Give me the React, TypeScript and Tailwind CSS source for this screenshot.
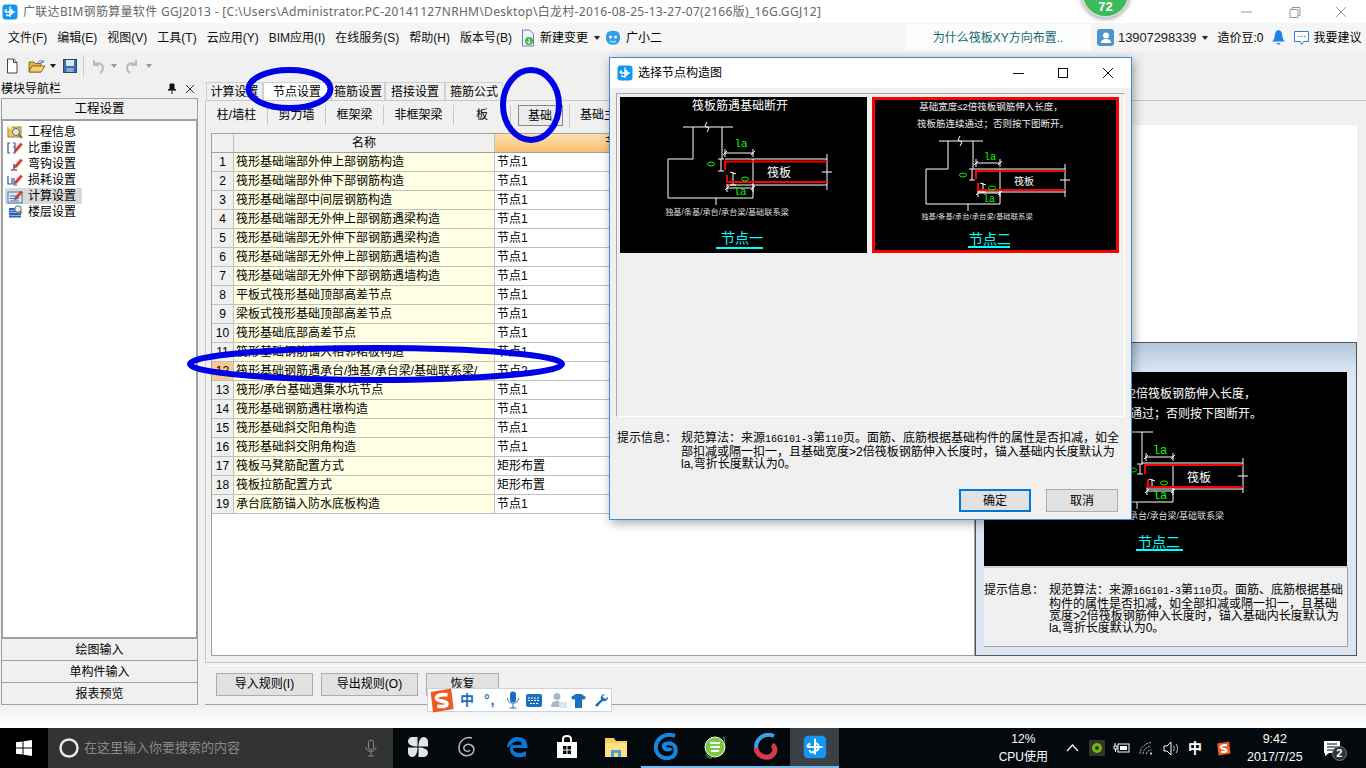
import React from "react";

const font = "font-['Liberation_Sans','Noto_Sans_CJK_SC',sans-serif]";

function AppIcon({ s = 16 }: { s?: number }) {
  return (
    <svg width={s} height={s} viewBox="0 0 16 16" className="shrink-0">
      <rect x="0.5" y="0.5" width="15" height="15" rx="3" fill="#1296f0" />
      <path d="M8 2.5V13M3 8h10M8 5.5c3 0 3.5 5 0 5M8 10.5c-2 2-3.500 1-3.500-.5M3 8c0-1.500 1-2 2-2" stroke="#fff" strokeWidth="1.300" fill="none" />
    </svg>
  );
}

function PencilMark() {
  return (
    <path d="M8 9.500 13.500 3l2 1.500L10 11l-2.500 1z" fill="#e8402a" stroke="#b8261a" strokeWidth="0.500" />
  );
}

function TreeIcon({ kind }: { kind: number }) {
  return (
    <svg width="17" height="16" viewBox="0 0 17 16" className="shrink-0">
      {kind === 0 && (
        <g>
          <rect x="1" y="3" width="13" height="10" fill="#e8c860" stroke="#a08030" />
          <circle cx="3" cy="3" r="2" fill="#fff2a0" />
          <circle cx="9" cy="8" r="3.500" fill="#dfe8ee" stroke="#666" />
          <path d="M11.500 10.500 15 14" stroke="#a06a20" strokeWidth="2" />
        </g>
      )}
      {kind === 1 && (
        <g>
          <path d="M3 3H1v10h2M6 3h2M6 7h2M6 13h2V3" stroke="#2a5aa0" fill="none" strokeWidth="1.200" />
          <PencilMark />
        </g>
      )}
      {kind === 2 && (
        <g>
          <path d="M7 13V8M4 14h6" stroke="#222" strokeWidth="1.200" fill="none" />
          <PencilMark />
        </g>
      )}
      {kind === 3 && (
        <g>
          <path d="M1 4v8h4V6M7 6v7h3" stroke="#2a5aa0" fill="none" strokeWidth="1.200" />
          <PencilMark />
        </g>
      )}
      {kind === 4 && (
        <g>
          <rect x="1" y="4" width="14" height="11" fill="#d8e8f6" stroke="#3a78b0" />
          <path d="M3 8h7M3 10.500h9M3 13h9" stroke="#3a78b0" />
          <PencilMark />
        </g>
      )}
      {kind === 5 && (
        <g>
          <path d="M2 5h11M2 7.500h12M2 10h12M2 12.500h12" stroke="#2a62b8" strokeWidth="1.800" />
          <circle cx="11" cy="5" r="3.200" fill="#e8eef2" stroke="#666" />
          <path d="M13 7l2 2" stroke="#a06a20" strokeWidth="1.600" />
        </g>
      )}
    </svg>
  );
}

type G = {
  topL: number; topR: number; topY: number; brk: number; colL: number; colR: number;
  boxL: number; boxR: number; boxT: number; boxB: number; tick: number;
  sL: number; sL2: number; sR: number; sT: number; sB: number;
  rT: number; rB: number; rX1: number; rX2: number; rV1: number; rV2: number;
  eT: number; eB: number; bY: number; sx: number; sy: number; sf: number;
  la1: [number, number]; la2: [number, number]; d1: [number, number, number]; d2: [number, number, number];
  z1: [number, number]; z2: [number, number];
  small: [number, number, number]; lab: [number, number]; ul: [number, number, number];
  name: string;
};

function Dim({ x1, y, x2 }: { x1: number; y: number; x2: number }) {
  return (
    <path d={`M${x1} ${y}H${x2}M${x1} ${y - 4}V${y + 4}M${x2} ${y - 4}V${y + 4}M${x1 - 2} ${y + 2}l4 -4M${x2 - 2} ${y + 2}l4 -4`} stroke="#fff" fill="none" />
  );
}

function Detail({ g, children }: { g: G; children?: React.ReactNode }) {
  return (
    <g>
      {children}
      <g stroke="#fff" fill="none" strokeWidth="1">
        <path d={`M${g.topL} ${g.topY}H${g.topR}M${g.colL} ${g.topY}V${g.boxT}M${g.colR} ${g.topY}V${g.boxT}`} />
        <path d={`M${g.brk - 1} ${g.topY - 5}l-2 4 4 2 -2 4`} />
        <path d={`M${g.colL} ${g.boxT}H${g.boxL}V${g.boxB}H${g.boxR}V${g.boxT}M${g.tick} ${g.boxB}v7`} />
        <path d={`M${g.sL} ${g.sT}H${g.sR}M${g.sL2} ${g.sB}H${g.sR}M${g.sR} ${g.eT}V${g.eB}M${g.sR - 5} ${g.bY}h10`} />
        <path d={`M${g.d1[0]} ${g.d1[1]}V${g.d1[2]}M${g.d1[0] - 3} ${g.d1[1]}h6M${g.d1[0] - 3} ${g.d1[2]}h6`} />
        <path d={`M${g.d2[0]} ${g.d2[1]}V${g.d2[2]}M${g.d2[0] - 3} ${g.d2[1]}l6 2M${g.d2[0] - 3} ${g.d2[2]}h6`} />
      </g>
      <Dim x1={g.la1[0]} x2={g.boxR} y={g.la1[1]} />
      <Dim x1={g.la2[0]} x2={g.boxR} y={g.la2[1]} />
      <path d={`M${g.rX1} ${g.rV1}V${g.rT}H${g.sR}M${g.rX2} ${g.rV2}V${g.rB}H${g.sR}`} stroke="#ff0000" strokeWidth="2" fill="none" />
      <ellipse cx={g.z1[0]} cy={g.z1[1]} rx="3.500" ry="2" stroke="#00ff00" fill="none" />
      <ellipse cx={g.z2[0]} cy={g.z2[1]} rx="3.500" ry="2" stroke="#00ff00" fill="none" />
      <text x={g.sx} y={g.sy} textAnchor="middle" fontSize={g.sf} fill="#fff" dominantBaseline="central">筏板</text>
      <text x={g.small[0]} y={g.small[1]} textAnchor="middle" fontSize={g.small[2]} fill="#ddd" dominantBaseline="central">独基/条基/承台/承台梁/基础联系梁</text>
      <text x={g.lab[0]} y={g.lab[1]} textAnchor="middle" fontSize="14" fill="#00ffff" dominantBaseline="central">{g.name}</text>
      <path d={`M${g.ul[0]} ${g.ul[2]}H${g.ul[1]}`} stroke="#00ffff" strokeWidth="2" />
    </g>
  );
}

function La({ x, y, f }: { x: number; y: number; f: number }) {
  return (
    <text x={x} y={y} textAnchor="middle" fontSize={f} fill="#00ff00" dominantBaseline="central" className="font-['Liberation_Mono',monospace]">la</text>
  );
}

function Num({ children }: { children: React.ReactNode }) {
  return <span className="font-['Liberation_Mono',monospace] text-[10px]">{children}</span>;
}

const g1: G = {
  topL: 63, topR: 113, topY: 30, brk: 88, colL: 73, colR: 102, boxL: 48, boxR: 133, boxT: 62, boxB: 101, tick: 96,
  sL: 105, sL2: 107, sR: 207, sT: 62, sB: 88, rT: 64.5, rB: 85, rX1: 105, rX2: 107, rV1: 73, rV2: 78,
  eT: 57, eB: 93, bY: 75, sx: 159, sy: 76, sf: 12, la1: [105, 56], la2: [107, 91], d1: [101, 62, 74], d2: [113, 75, 88],
  z1: [91, 67], z2: [125, 82], small: [107, 115, 8.2], lab: [122, 141], ul: [96, 143, 151], name: "节点一",
};
const g2: G = {
  topL: 67, topR: 111, topY: 44, brk: 89, colL: 76, colR: 101, boxL: 54, boxR: 128, boxT: 72, boxB: 107, tick: 96,
  sL: 103, sL2: 106, sR: 193, sT: 72, sB: 95, rT: 74, rB: 93, rX1: 104, rX2: 106, rV1: 82, rV2: 86,
  eT: 67, eB: 100, bY: 83, sx: 152, sy: 84, sf: 10, la1: [104, 66], la2: [106, 96], d1: [100, 72, 83], d2: [111, 86, 95],
  z1: [91, 78], z2: [120, 91], small: [105, 119, 7.4], lab: [118, 142], ul: [96, 138, 150], name: "节点二",
};
const g3: G = {
  topL: 96, topR: 169, topY: 60, brk: 130, colL: 130, colR: 158, boxL: 105, boxR: 189, boxT: 92, boxB: 130, tick: 153,
  sL: 158, sL2: 163, sR: 259, sT: 91, sB: 117, rT: 93, rB: 115, rX1: 161, rX2: 164, rV1: 102, rV2: 107,
  eT: 86, eB: 121, bY: 104, sx: 215, sy: 106, sf: 12, la1: [162, 85], la2: [163, 119], d1: [156, 92, 102], d2: [168, 107, 115],
  z1: [149, 98], z2: [180, 111], small: [172, 144, 9], lab: [175, 170], ul: [152, 199, 178], name: "节点二",
};

const rows: [string, string][] = [
  ["筏形基础端部外伸上部钢筋构造", "节点1"],
  ["筏形基础端部外伸下部钢筋构造", "节点1"],
  ["筏形基础端部中间层钢筋构造", "节点1"],
  ["筏形基础端部无外伸上部钢筋遇梁构造", "节点1"],
  ["筏形基础端部无外伸下部钢筋遇梁构造", "节点1"],
  ["筏形基础端部无外伸上部钢筋遇墙构造", "节点1"],
  ["筏形基础端部无外伸下部钢筋遇墙构造", "节点1"],
  ["平板式筏形基础顶部高差节点", "节点1"],
  ["梁板式筏形基础顶部高差节点", "节点1"],
  ["筏形基础底部高差节点", "节点1"],
  ["筏形基础钢筋锚入相邻裙板构造", "节点1"],
  ["筏形基础钢筋遇承台/独基/承台梁/基础联系梁/", "节点2"],
  ["筏形/承台基础遇集水坑节点", "节点1"],
  ["筏形基础钢筋遇柱墩构造", "节点1"],
  ["筏形基础斜交阳角构造", "节点1"],
  ["筏形基础斜交阴角构造", "节点1"],
  ["筏板马凳筋配置方式", "矩形布置"],
  ["筏板拉筋配置方式", "矩形布置"],
  ["承台底筋锚入防水底板构造", "节点1"],
];

const menus = ["文件(F)", "编辑(E)", "视图(V)", "工具(T)", "云应用(Y)", "BIM应用(I)", "在线服务(S)", "帮助(H)", "版本号(B)"];
const tree = ["工程信息", "比重设置", "弯钩设置", "损耗设置", "计算设置", "楼层设置"];
const topTabs: [string, string][] = [
  ["计算设置", "w-[57px]"],
  ["节点设置", "w-[68px] bg-white"],
  ["箍筋设置", "w-[54px]"],
  ["搭接设置", "w-[60px]"],
  ["箍筋公式", "w-[58px]"],
];
const subTabs: [string, string][] = [
  ["柱/墙柱", "w-[62px]"],
  ["剪力墙", "w-[58px]"],
  ["框架梁", "w-[58px]"],
  ["非框架梁", "w-[70px]"],
  ["板", "w-[57px]"],
];

function Btn({ label, w, primary }: { label: string; w: string; primary?: boolean }) {
  return (
    <div className={`h-[23px] flex items-center justify-center bg-[#e1e1e1] text-[12px] text-black ${w} ${primary ? "border-2 border-[#0078d7]" : "border border-[#adadad]"}`}>
      {label}
    </div>
  );
}

function TaskCell({ children, active, bar }: { children: React.ReactNode; active?: boolean; bar?: boolean }) {
  return (
    <div className={`w-[49.600px] h-full flex items-center justify-center border-b-2 ${active ? "bg-[#3a4044] border-[#76b9ed]" : bar ? "border-[#76b9ed]" : "border-transparent"}`}>
      {children}
    </div>
  );
}

function SougouS({ s }: { s: number }) {
  return (
    <svg width={s} height={s} viewBox="0 0 24 24" className="shrink-0">
      <path d="M3 5 20 2l2 17-17 3z" fill="#ee5a24" />
      <path d="M17 7.500C11 6.500 7.500 8 8 10.500c.500 2.500 8 1.500 8.500 4 .5 2.500-4 3-8 2" stroke="#fff" strokeWidth="3" fill="none" />
    </svg>
  );
}

export default function App() {
  return (
    <div className={`relative w-[1366px] h-[768px] overflow-hidden bg-[#f0f0f0] flex flex-col text-[12px] text-black ${font}`}>
      {/* title bar */}
      <div className="h-[23px] bg-white flex items-center relative shrink-0">
        <div className="pl-[2px] pr-[5px]">
          <AppIcon />
        </div>
        <span className="text-[#666] whitespace-nowrap text-[12px] font-['Noto_Sans','Noto_Sans_CJK_SC',sans-serif] tracking-[0.31px]">
          广联达BIM钢筋算量软件 GGJ2013 - [C:\Users\Administrator.PC-20141127NRHM\Desktop\白龙村-2016-08-25-13-27-07(2166版)_16G.GGJ12]
        </span>
        <div className="ml-auto flex items-center h-full text-[#999]">
          <svg width="46" height="16" viewBox="0 0 46 16"><path d="M15 8h11" stroke="#999" /></svg>
          <svg width="46" height="16" viewBox="0 0 46 16"><path d="M18 5.500h8v8h-8zM20 5.500v-2h8v8h-2" stroke="#999" fill="none" /></svg>
          <svg width="46" height="16" viewBox="0 0 46 16" className="mr-[2px]"><path d="M18 3l10 10M28 3 18 13" stroke="#999" fill="none" /></svg>
        </div>
      </div>

      {/* menu bar */}
      <div className="h-[29px] bg-[#f5f5f5] flex items-center shrink-0 pl-[8px] relative">
        <div className="flex items-center gap-[10px]">
          {menus.map((m) => (
            <span key={m} className="whitespace-nowrap text-[#111]">{m}</span>
          ))}
        </div>
        <svg width="15" height="18" viewBox="0 0 15 18" className="ml-[9px]">
          <path d="M1.500 1h7l4 4v12h-11z" fill="#eef3fa" stroke="#5b86c0" />
          <circle cx="8" cy="12" r="4" fill="#4caf3c" />
          <path d="M8 9.500v5M6 12.500l2 2 2-2" stroke="#fff" fill="none" />
        </svg>
        <span className="ml-[4px] whitespace-nowrap">新建变更</span>
        <span className="ml-[6px] w-0 h-0 border-x-[3px] border-x-transparent border-t-[4px] border-t-[#222]" />
        <svg width="16" height="16" viewBox="0 0 16 16" className="ml-[5px]">
          <path d="M2 3c2-3 10-3 12 0 2 4 1 9-2 11-2 1-6 1-8 0C1 12 0 7 2 3z" fill="#2f9fe8" />
          <circle cx="5.500" cy="7" r="1.500" fill="#fff" />
          <circle cx="10.500" cy="7" r="1.500" fill="#fff" />
          <path d="M5 11c2 1.500 4 1.500 6 0" stroke="#fff" fill="none" />
        </svg>
        <span className="ml-[5px] whitespace-nowrap">广小二</span>

        <div className="absolute left-[905px] top-[1px] h-[27px] w-[186px] bg-[#fbfdfd] flex items-center justify-center text-[#15686f] whitespace-nowrap">
          为什么筏板XY方向布置..
        </div>
        <div className="absolute left-[1097px] top-0 h-full flex items-center">
          <svg width="17" height="17" viewBox="0 0 17 17">
            <rect width="17" height="17" rx="3" fill="#4a94cf" />
            <circle cx="9" cy="6.500" r="3" fill="#fff" />
            <path d="M4 14c0-3 2-4 5-4s5 1 5 4z" fill="#fff" />
          </svg>
          <span className="ml-[4px] text-[13px] text-[#222] tracking-[-0.100px]">13907298339</span>
          <span className="ml-[6px] w-0 h-0 border-x-[3px] border-x-transparent border-t-[4px] border-t-[#222]" />
          <span className="ml-[9px] text-[12px] whitespace-nowrap">造价豆:0</span>
          <svg width="13" height="15" viewBox="0 0 13 15" className="ml-[9px]">
            <path d="M6.500 0C3 1 3 4 2.500 7S1 10.500 0 11.500h13C12 10.500 11 10 10.500 7S10 1 6.500 0z" fill="#1a82e8" />
            <path d="M4.500 13c1 2 3 2 4 0z" fill="#1a82e8" />
          </svg>
          <svg width="17" height="16" viewBox="0 0 17 16" className="ml-[8px]">
            <path d="M1.500 1.500h14v10h-5l-2 3-1-3h-6z" fill="#fff" stroke="#2a82d8" />
            <path d="M5 6.500h1.500M8 6.500h1.500M11 6.500h1.500" stroke="#2a82d8" />
          </svg>
          <span className="ml-[3px] whitespace-nowrap">我要建议</span>
        </div>
      </div>

      {/* toolbar */}
      <div className="h-[28px] flex items-center shrink-0 pl-[5px]">
        <svg width="14" height="16" viewBox="0 0 14 16"><path d="M2.500 1h6l3.500 3.500V15h-9.500z" fill="#fff" stroke="#444" /><path d="M8.500 1v3.500H12" fill="none" stroke="#444" /></svg>
        <svg width="18" height="16" viewBox="0 0 18 16" className="ml-[9px]"><path d="M1 4h5l1 1.500h6V14H1z" fill="#d8b050" stroke="#8a6a20" /><path d="M1 14l3-6h13l-4 6z" fill="#f3d070" stroke="#8a6a20" /><path d="M10 5c1-3 4-3 5-1M15 2v2.500h-2.500" stroke="#4a78c0" fill="none" /></svg>
        <span className="ml-[4px] w-0 h-0 border-x-[3px] border-x-transparent border-t-[4px] border-t-[#222]" />
        <svg width="14" height="14" viewBox="0 0 14 14" className="ml-[7px]"><rect x="0.500" y="0.500" width="13" height="13" fill="#3a6cb0" stroke="#24487c" /><rect x="3" y="1" width="8" height="6" fill="#dfe8f2" /><rect x="3.500" y="9" width="7" height="4" fill="#8aa8d0" /></svg>
        <span className="ml-[6px] w-px h-[22px] bg-[#ccc]" />
        <svg width="15" height="15" viewBox="0 0 15 15" className="ml-[7px]"><path d="M3 1v5h5M3 6c3-3 9-2 9 3 0 2-1 4-3 5" stroke="#bbb" strokeWidth="2" fill="none" /></svg>
        <span className="ml-[5px] w-0 h-0 border-x-[3px] border-x-transparent border-t-[4px] border-t-[#999]" />
        <svg width="15" height="15" viewBox="0 0 15 15" className="ml-[7px]"><path d="M12 1v5H7M12 6C9 3 3 4 3 9c0 2 1 4 3 5" stroke="#bbb" strokeWidth="2" fill="none" /></svg>
        <span className="ml-[7px] w-0 h-0 border-x-[3px] border-x-transparent border-t-[4px] border-t-[#999]" />
      </div>

      {/* main */}
      <div className="flex-1 flex min-h-0">
        {/* left nav */}
        <div className="w-[199px] shrink-0 flex flex-col">
          <div className="h-[17px] flex items-center relative">
            <span className="text-[12px] pl-px">模块导航栏</span>
            <svg width="10" height="12" viewBox="0 0 10 12" className="absolute left-[167px] top-[3px]"><path d="M3 1h4v5l2 1H1l2-1zM5 7v4" stroke="#111" fill="#111" /></svg>
            <svg width="10" height="10" viewBox="0 0 10 10" className="absolute left-[185px] top-[4px]"><path d="M1 1l8 8M9 1 1 9" stroke="#333" /></svg>
          </div>
          <div className="mt-[1px] h-[22px] pt-px mx-px border border-[#a0a0a0] flex items-center justify-center text-[12.500px]">工程设置</div>
          <div className="flex-1 mx-px bg-white border-2 border-t border-[#a0a0a0] pt-[3px] pl-[2px]">
            {tree.map((t, i) => (
              <div key={t} className={`h-[16px] w-[77px] flex items-center pl-[2px] gap-[4px] ${i === 4 ? "bg-[#d9d9d9]" : ""}`}>
                <TreeIcon kind={i} />
                <span className="whitespace-nowrap text-[12px] leading-[16px]">{t}</span>
              </div>
            ))}
          </div>
          {["绘图输入", "单构件输入", "报表预览"].map((t) => (
            <div key={t} className="h-[22px] pt-px mx-px border border-[#a0a0a0] border-t-0 first-of-type:border-t flex items-center justify-center">{t}</div>
          ))}
        </div>

        {/* right */}
        <div className="flex-1 min-w-0 flex flex-col pl-[6px]">
          <div className="h-[18px] mt-[2px] flex pl-px shrink-0">
            {topTabs.map(([t, w]) => (
              <div key={t} className={`h-full border border-b-0 border-[#d0d0d0] flex items-center justify-center whitespace-nowrap ${w}`}>{t}</div>
            ))}
          </div>
          <div className="flex-1 min-h-0 border border-[#c8c8c8] border-r-0 flex flex-col">
            <div className="h-[24px] shrink-0 flex items-center">
              {subTabs.map(([t, w]) => (
                <div key={t} className={`h-[20px] mt-[4px] flex items-center justify-center whitespace-nowrap border-r border-[#c8c8c8] ${w}`}>{t}</div>
              ))}
              <div className="w-[59px] h-[24px] mt-[5px] flex items-center justify-center border-r border-[#c8c8c8]">
                <div className="w-[45px] h-[21px] bg-[#ececec] border border-[#888] flex items-center justify-center">基础</div>
              </div>
              <span className="ml-[10px] mt-[4px] whitespace-nowrap">基础主梁/承台梁</span>
            </div>
            <div className="flex-1 min-h-0 flex">
              {/* table */}
              <div className="w-[769px] shrink-0 pl-[5px] pt-[8px] pb-[6px]">
                <div className="h-full bg-white border border-[#a0a0a0]">
                  <div className="h-[19px] flex border-b border-[#a0a0a0] bg-[#f0f0f0]">
                    <div className="w-[22px] border-r border-[#c0c0c0]" />
                    <div className="w-[261px] border-r border-[#c0c0c0] flex items-center justify-center">名称</div>
                    <div className="w-[244px] bg-gradient-to-b from-[#fbe0b0] to-[#f8c070] flex items-center justify-center">节点</div>
                  </div>
                  {rows.map(([n, v], i) => (
                    <div key={i} className="h-[19px] flex border-b border-[#c0c0c0]">
                      <div className={`w-[22px] border-r border-[#c0c0c0] flex items-center justify-center ${i === 11 ? "bg-[#fcc98a]" : "bg-[#f0f0f0]"}`}>{i + 1}</div>
                      <div className="w-[261px] border-r border-[#c0c0c0] bg-[#ffffe3] flex items-center pl-[2px] whitespace-nowrap overflow-hidden">{n}</div>
                      <div className="flex-1 flex items-center pl-[2px]">{v}</div>
                    </div>
                  ))}
                </div>
              </div>
              {/* right side */}
              <div className="w-[382px] shrink-0 flex flex-col pb-[6px]">
                <div className="flex-1 bg-white" />
                <div className="h-[314px] border border-[#555] bg-[#dbe6f2] flex flex-col px-[8px]">
                  <div className="h-[29px] -mx-[8px] shrink-0 bg-gradient-to-b from-[#b3c8dc] to-[#dbe6f2]" />
                  <svg width="363" height="194" viewBox="0 0 363 194" className="shrink-0 bg-black">
                    <Detail g={g3}>
                      <text x="272" y="22" textAnchor="end" fontSize="12" fill="#fff" dominantBaseline="central">基础宽度≤2倍筏板钢筋伸入长度，</text>
                      <text x="278" y="42" textAnchor="end" fontSize="12" fill="#fff" dominantBaseline="central">筏板筋连续通过；否则按下图断开。</text>
                    </Detail>
                    <La x={176} y={79} f={12} />
                    <La x={176} y={124} f={12} />
                  </svg>
                  <div className="h-[81px] shrink-0 bg-[#f0f0f0] border-r border-b border-[#a0a0a0] border-t-2 border-t-[#d0d0d0] flex pt-[16px] leading-[12px]">
                    <span className="w-[65px] shrink-0 whitespace-nowrap">提示信息：</span>
                    <div className="whitespace-nowrap">
                      <div>规范算法：来源<Num>16G101-3</Num>第<Num>110</Num>页。面筋、底筋根据基础</div>
                      <div>构件的属性是否扣减，如全部扣减或隔一扣一，且基础</div>
                      <div>宽度&gt;2倍筏板钢筋伸入长度时，锚入基础内长度默认为</div>
                      <div>la,弯折长度默认为0。</div>
                    </div>
                  </div>
                </div>
              </div>
            </div>
          </div>
          <div className="h-[40px] shrink-0 mt-[2px] border-t border-white border-b border-b-[#a0a0a0] flex items-center pl-[11px] pb-[2px] gap-[8px]">
            <Btn label="导入规则(I)" w="w-[97px]" />
            <Btn label="导出规则(O)" w="w-[97px]" />
            <Btn label="恢复" w="w-[73px]" />
          </div>
        </div>
      </div>

      <div className="h-[23px] shrink-0 bg-gradient-to-b from-[#f0f0f0] to-white" />

      {/* taskbar */}
      <div className="h-[40px] shrink-0 bg-[#03090c] flex items-center text-white">
        <div className="w-[48px] h-full bg-black flex items-center justify-center">
          <svg width="16" height="16" viewBox="0 0 16 16"><path d="M0 2.300 6.500 1.400V7.500H0zM7.500 1.300 16 0v7.500H7.500zM0 8.500h6.500v6.100L0 13.700zM7.500 8.500H16V16l-8.500-1.300z" fill="#fff" /></svg>
        </div>
        <div className="w-[345px] h-full bg-[#333] flex items-center pl-[10px] relative">
          <svg width="22" height="22" viewBox="0 0 22 22"><circle cx="11" cy="11" r="8.500" stroke="#e8e8e8" strokeWidth="2.500" fill="none" /></svg>
          <span className="ml-[4px] text-[#888] text-[13px] whitespace-nowrap">在这里输入你要搜索的内容</span>
          <svg width="14" height="18" viewBox="0 0 14 18" className="absolute left-[316px] top-[11px]"><rect x="4.500" y="1" width="5" height="10" rx="2.500" stroke="#888" fill="none" /><path d="M2 8c0 6 10 6 10 0M7 13v4M4 17h6" stroke="#888" fill="none" /></svg>
        </div>
        <TaskCell>
          <svg width="22" height="22" viewBox="0 0 22 22">
            <g fill="#e4e4e4">
              <path id="blade" d="M10.500 10.500V1H5.500a4.500 4.500 0 0 0-4.500 4.500c0 3 4 5 9.500 5z" />
              <path d="M11.500 10.500H21V5.500A4.500 4.500 0 0 0 16.500 1c-3 0-5 4-5 9.500z" />
              <path d="M11.500 11.500V21h5a4.500 4.500 0 0 0 4.500-4.500c0-3-4-5-9.500-5z" />
              <path d="M10.500 11.500H1v5A4.500 4.500 0 0 0 5.500 21c3 0 5-4 5-9.500z" />
            </g>
          </svg>
        </TaskCell>
        <TaskCell>
          <svg width="22" height="24" viewBox="0 0 22 24"><path d="M16 3C8 1 3 7 3 13s6 9 11 7 5-8 1-10-8 1-7 4 5 3 6 1" stroke="#bbb" strokeWidth="1.500" fill="none" /></svg>
        </TaskCell>
        <TaskCell>
          <svg width="24" height="24" viewBox="0 0 24 24"><path d="M2 12C3 5 8 2 13 2c6 0 10 4 9.500 11H8c0 5 7 7 13 3v5c-7 3-16 1-16-7 0-2 1-4 2-5 1 2 2 1 7 1 2 0 3 0 3-1 0-3-7-5-13 3z" fill="#0a78d7" /></svg>
        </TaskCell>
        <TaskCell>
          <svg width="22" height="24" viewBox="0 0 22 24"><path d="M1 7h20v16H1z" fill="#fff" /><path d="M7 7V4c0-4 8-4 8 0v3" stroke="#fff" strokeWidth="2" fill="none" /><path d="M7 11h3.500v3.500H7zM11.500 11H15v3.500h-3.500zM7 15.500h3.500V19H7zM11.500 15.500H15V19h-3.500z" fill="#03090c" /></svg>
        </TaskCell>
        <TaskCell>
          <svg width="24" height="22" viewBox="0 0 24 22"><path d="M1 2h9l2 3h11v16H1z" fill="#f3cf5e" /><path d="M1 7h22v14H1z" fill="#ffe082" /><path d="M7 14h10v7H7z" fill="#4aa0d8" /><path d="M10 17h4v4h-4z" fill="#ffe082" /></svg>
        </TaskCell>
        <TaskCell bar>
          <svg width="26" height="28" viewBox="0 0 26 28"><path d="M22 3C12-1 2 6 3 16c1 8 10 11 16 8 5-3 5-11 0-13-4-2-9 0-8 3s6 3 7 1" stroke="#1488e0" strokeWidth="4" fill="none" /></svg>
        </TaskCell>
        <TaskCell bar>
          <svg width="24" height="26" viewBox="0 0 24 26"><circle cx="12" cy="13" r="10" fill="#7ac943" stroke="#fff" /><path d="M7 13h10M7 9h10M8 17h8" stroke="#fff" strokeWidth="2" /><path d="M20 3c2 2 2 3 1 5M3 20c1 3 4 4 6 4" stroke="#2a8a2a" strokeWidth="1.500" fill="none" /></svg>
        </TaskCell>
        <TaskCell bar>
          <svg width="26" height="28" viewBox="0 0 26 28"><path d="M22 3C12-1 4 6 4 15" stroke="#3aa0e8" strokeWidth="4" fill="none" /><path d="M4 15c1 8 10 11 15 8 5-3 5-9 1-11" stroke="#d83a4a" strokeWidth="5" fill="none" /></svg>
        </TaskCell>
        <TaskCell active>
          <AppIcon s={24} />
        </TaskCell>

        <div className="ml-[154px] w-[60px] text-center leading-[18px] -mt-[1px] text-[12px]">
          <div>12%</div>
          <div className="whitespace-nowrap">CPU使用</div>
        </div>
        <div className="ml-[7px] flex items-center">
          <span className="w-[24.500px] flex justify-center"><svg width="13" height="8" viewBox="0 0 13 8"><path d="M1 7l5.500-6L12 7" stroke="#fff" fill="none" strokeWidth="1.200" /></svg></span>
          <span className="w-[24.500px] flex justify-center"><svg width="16" height="16" viewBox="0 0 16 16"><rect width="16" height="16" fill="#333" /><circle cx="8" cy="8" r="5" fill="#76b900" /><circle cx="8" cy="8" r="2" fill="#333" /></svg></span>
          <span className="w-[24.500px] flex justify-center"><svg width="17" height="12" viewBox="0 0 17 12"><rect x="5" y="2" width="11" height="8" stroke="#fff" fill="none" /><rect x="7" y="4" width="7" height="4" fill="#fff" /><path d="M2 1v3M1 4h3v3H1zM2.500 7v3" stroke="#fff" /></svg></span>
          <span className="w-[24.500px] flex justify-center"><svg width="14" height="14" viewBox="0 0 14 14"><path d="M1 12.500c0-6 5-10 11-11M4 13c0-4 3-7 8-8M7.500 13c0-2 2-4 5-4" stroke="#bbb" fill="none" strokeDasharray="2 1" /><circle cx="12" cy="12.500" r="1" fill="#fff" /></svg></span>
          <span className="w-[24.500px] flex justify-center"><svg width="16" height="15" viewBox="0 0 16 15"><path d="M1 5h3l4-4v13l-4-4H1z" stroke="#fff" fill="none" /><path d="M10.500 5c1 1.500 1 3.500 0 5M13 3c2 2.500 2 6.500 0 9" stroke="#ccc" fill="none" /></svg></span>
          <span className="w-[24.500px] text-center text-[14px] font-bold">中</span>
          <span className="w-[24.500px] flex justify-center pl-[8px]"><SougouS s={17} /></span>
        </div>
        <div className="w-[85px] text-center text-[12.500px] leading-[18px] -mt-[1px] pl-[1px]">
          <div>9:42</div>
          <div className="whitespace-nowrap">2017/7/25</div>
        </div>
        <div className="relative w-[30px] h-full flex items-center justify-center">
          <svg width="16" height="15" viewBox="0 0 16 15"><path d="M0 0h16v12H5l-4 3v-3H0z" fill="#fff" /><path d="M3 3h10M3 6h10M3 9h8" stroke="#03090c" /></svg>
          <span className="absolute left-[15px] top-[18px] w-[15px] h-[15px] rounded-full bg-[#333] border border-[#777] flex items-center justify-center text-[11px] font-bold">2</span>
        </div>
      </div>

      {/* ---- overlays ---- */}

      {/* score badge at the top of the screen */}
      <div className="absolute left-[1081px] top-[-31px] w-[49px] h-[49px] rounded-full bg-[#3dbb5c] border-[2px] border-[#d8d8d8] shadow-[0_1px_4px_rgba(0,0,0,0.4)] flex items-end justify-center pb-[3px] leading-[13px] text-white font-bold text-[13px]">72</div>

      {/* dialog */}
      <div className="absolute left-[609px] top-[57px] w-[523px] h-[463px] bg-[#f0f0f0] border border-[#3c8ae0] shadow-[2px_3px_10px_rgba(0,0,0,0.35)] flex flex-col">
        <div className="h-[30px] bg-white shrink-0 flex items-center pl-[7px]">
          <AppIcon />
          <span className="ml-[5px]">选择节点构造图</span>
          <div className="ml-auto flex items-center">
            <svg width="46" height="14" viewBox="0 0 46 14"><path d="M20 7.500h11" stroke="#111" /></svg>
            <svg width="46" height="14" viewBox="0 0 46 14"><rect x="19.500" y="2.500" width="9" height="9" stroke="#111" fill="none" /></svg>
            <svg width="46" height="14" viewBox="0 0 46 14"><path d="M18 2l10 10M28 2 18 12" stroke="#111" fill="none" /></svg>
          </div>
        </div>
        <div className="mx-[6px] mt-[5px] h-[324px] border border-[#a8a8a8] border-b-white border-r-white p-[3px] flex gap-[5px] items-start shrink-0">
          <svg width="247" height="156" viewBox="0 0 247 156" className="bg-black shrink-0">
            <Detail g={g1}>
              <text x="120" y="9" textAnchor="middle" fontSize="12" fill="#fff" dominantBaseline="central">筏板筋遇基础断开</text>
            </Detail>
            <La x={121} y={47} f={11} />
            <La x={120} y={95} f={11} />
          </svg>
          <svg width="247" height="156" viewBox="3 3 241 150" className="bg-black shrink-0 border-[3px] border-[#ff0000] box-border">
            <Detail g={g2}>
              <text x="119" y="9" textAnchor="middle" fontSize="9.500" fill="#eee" dominantBaseline="central">基础宽度≤2倍筏板钢筋伸入长度，</text>
              <text x="121" y="26" textAnchor="middle" fontSize="9.500" fill="#eee" dominantBaseline="central">筏板筋连续通过；否则按下图断开。</text>
            </Detail>
            <La x={118} y={60} f={10} />
            <La x={117} y={102} f={10} />
          </svg>
        </div>
        <div className="flex pl-[7px] pt-[15px] leading-[12px] shrink-0">
          <span className="w-[64px] shrink-0 whitespace-nowrap">提示信息：</span>
          <div className="whitespace-nowrap">
            <div>规范算法：来源<Num>16G101-3</Num>第<Num>110</Num>页。面筋、底筋根据基础构件的属性是否扣减，如全</div>
            <div>部扣减或隔一扣一，且基础宽度&gt;2倍筏板钢筋伸入长度时，锚入基础内长度默认为</div>
            <div>la,弯折长度默认为0。</div>
          </div>
        </div>
        <div className="mt-auto mb-[7px] flex justify-end gap-[15px] pr-[13px]">
          <Btn label="确定" w="w-[72px]" primary />
          <Btn label="取消" w="w-[72px]" />
        </div>
      </div>

      {/* hand-drawn blue annotation ellipses */}
      <svg width="1366" height="768" viewBox="0 0 1366 768" className="absolute left-0 top-0 pointer-events-none">
        <ellipse cx="289.500" cy="89" rx="41" ry="19" stroke="#0000e6" strokeWidth="6" fill="none" />
        <ellipse cx="531" cy="105" rx="28" ry="35" stroke="#0000e6" strokeWidth="6" fill="none" />
        <ellipse cx="376" cy="364" rx="186" ry="16" stroke="#0000e6" strokeWidth="6" fill="none" />
      </svg>

      {/* IME bar */}
      <div className="absolute left-[427px] top-[688px] w-[185px] h-[24px] bg-white border border-[#c8d4e0] flex items-center pl-[32px]">
        <div className="absolute left-[-1px] top-[-3px]"><SougouS s={29} /></div>
        <span className="text-[14px] font-bold text-[#1a6fc0] w-[18px]">中</span>
        <span className="ml-[6px] text-[14px] font-bold text-[#1a6fc0] w-[14px] leading-[14px] tracking-[1px]">°,</span>
        <svg width="14" height="18" viewBox="0 0 14 18" className="ml-[8px]"><rect x="4" y="0.500" width="6" height="11" rx="3" fill="#1a6fc0" /><path d="M1.500 7c0 7 11 7 11 0M7 13v4M3.500 17h7" stroke="#1a6fc0" fill="none" /></svg>
        <svg width="16" height="13" viewBox="0 0 16 13" className="ml-[6px]"><rect width="16" height="13" rx="2" fill="#1a6fc0" /><path d="M2 4h12M2 6.500h12M4 9.500h8" stroke="#fff" strokeDasharray="2 1" /></svg>
        <svg width="16" height="16" viewBox="0 0 16 16" className="ml-[9px]"><circle cx="6" cy="4.500" r="3.500" fill="#a8b8c8" /><path d="M0 15c0-4 2-6 6-6s6 2 6 6z" fill="#a8b8c8" /><rect x="8" y="10" width="8" height="6" fill="#dde4ea" /></svg>
        <svg width="15" height="15" viewBox="0 0 15 15" className="ml-[4px]"><path d="M5 1h5l5 3-2 3-2-1v9H4V6L2 7 0 4z" fill="#1a6fc0" /></svg>
        <svg width="15" height="15" viewBox="0 0 15 15" className="ml-[8px]"><path d="M14 4a4 4 0 0 1-5.500 4L3 14l-2-2 6-5.500A4 4 0 0 1 11 1L8.500 3.500 11 6z" fill="#1a6fc0" /></svg>
      </div>
    </div>
  );
}
